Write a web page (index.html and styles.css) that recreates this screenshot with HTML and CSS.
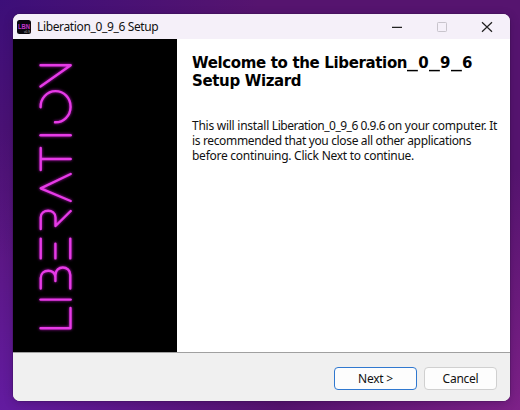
FILE: index.html
```html
<!DOCTYPE html>
<html lang="en">
<head>
<meta charset="utf-8">
<title>Liberation_0_9_6 Setup</title>
<link rel="stylesheet" href="styles.css">
</head>
<body>
<main class="window">
  <header class="titlebar">
    <svg class="app-icon" viewBox="0 0 14 14" aria-hidden="true">
      <rect width="14" height="14" rx="2.5" fill="#08050c"/>
      <text class="icon-name" x="1" y="8.8" textLength="12" lengthAdjust="spacingAndGlyphs">LBN</text>
      <text class="icon-version" x="7" y="12.6">v0.9</text>
    </svg>
    <span class="title">Liberation_0_9_6 Setup</span>
    <div class="controls">
      <svg viewBox="0 0 12 12"><path d="M1 6.4H11" stroke="#222" stroke-width="1.2"/></svg>
      <svg viewBox="0 0 12 12"><rect x="1.5" y="1.5" width="9" height="9" rx=".8" fill="none" stroke="#c8c4cc"/></svg>
      <svg viewBox="0 0 12 12"><path d="M1 1.2L11 10.8M11 1.2L1 10.8" stroke="#222" stroke-width="1.2"/></svg>
    </div>
  </header>
  <section class="content">
    <aside class="banner">
      <svg class="logo" viewBox="13 39 164 313" role="img" aria-label="Liberation">
        <g class="neon">
          <polyline points="40.5,65.3 70.7,65.3 40.5,86.5"/>
          <path d="M40.6 107.3A15 15.6 0 1 1 55 122.3"/>
          <line x1="40.5" y1="135.3" x2="70.7" y2="135.3"/>
          <path d="M40.7 148V170M40.7 159H70.7"/>
          <polyline points="70.7,174 40.7,188.3 70.7,201"/>
          <path d="M40.7 229V217.5C40.7 208.5 55.5 208.5 55.5 217.5V226L70.7 211"/>
          <path d="M40.7 238.6V258.4M55.4 243.6V258.4M70.3 238.6V258.4"/>
          <path d="M40.7 288.5V278C40.7 268.5 55.4 268.5 55.4 277V281V275C55.4 265 70.3 265 70.3 275V288.5"/>
          <line x1="40.5" y1="299.6" x2="70.7" y2="299.6"/>
          <polyline points="40.5,328.2 70.5,328.2 70.5,308"/>
        </g>
      </svg>
    </aside>
    <div class="copy">
      <h1><span class="heading-line">Welcome to the Liberation<span class="version"><i>_</i>0<i>_</i>9<i>_</i>6</span></span><span class="heading-line">Setup Wizard</span></h1>
      <p><span class="line">This will install <span class="name">Liberation_0_9_6 0.9.6 </span>on your computer. It</span><span class="line second">is recommended that you close all other applications</span><span class="line">before continuing. Click Next to continue.</span></p>
    </div>
  </section>
  <footer class="actions">
    <button class="btn btn-next">Next &gt;</button>
    <button class="btn btn-cancel">Cancel</button>
  </footer>
</main>
</body>
</html>
```
FILE: styles.css
```css
* { box-sizing: border-box; }
body {
  margin: 0;
  width: 520px;
  height: 410px;
  padding: 14px 10px 9px 13px;
  overflow: hidden;
  background:
    radial-gradient(circle at 0 0, rgba(58, 14, 122, .9), rgba(58, 14, 122, 0) 260px),
    radial-gradient(circle at 0 100%, rgba(100, 28, 165, .9), rgba(100, 28, 165, 0) 280px),
    radial-gradient(circle at 100% 100%, #7d2188, rgba(125, 33, 136, 0) 240px),
    #56146f;
  font-family: "Noto Sans", sans-serif;
  font-size: 12px;
  color: #111;
}
.window {
  width: 497px;
  height: 387px;
  display: flex;
  flex-direction: column;
  border-radius: 7px;
  overflow: hidden;
  background: #fff;
  box-shadow: 0 0 0 .5px rgba(50, 20, 70, .5), 0 2px 10px rgba(40, 0, 60, .3);
}
.titlebar {
  height: 25px;
  flex: none;
  display: flex;
  align-items: center;
  padding: 0 17px 0 4px;
  background: #f5f0f9;
}
.app-icon { width: 14px; height: 14px; margin-right: 6px; }
.icon-name { font: bold 6.5px "Liberation Sans", sans-serif; fill: #c436cf; }
.icon-version { font: 3.2px "Liberation Sans", sans-serif; fill: #bbb; }
.title { letter-spacing: -.36px; white-space: nowrap; }
.controls { margin-left: auto; display: flex; gap: 33px; }
.controls svg { width: 12px; height: 12px; }
.content { height: 313px; flex: none; display: flex; }
.banner { width: 164px; flex: none; background: #000; }
.logo { display: block; width: 164px; height: 313px; }
.neon {
  fill: none;
  stroke: #e63be6;
  stroke-width: 2.4;
  stroke-linecap: round;
  stroke-linejoin: round;
  filter: drop-shadow(0 0 1.5px #b010b6);
}
.copy { padding: 15px 0 0 15px; white-space: nowrap; }
h1 {
  margin: 0;
  font: bold 15px/18px "DejaVu Sans", sans-serif;
  letter-spacing: -.35px;
  color: #000;
}
.heading-line { display: block; }
.version { letter-spacing: .5px; }
.version i {
  display: inline-block;
  width: 11px;
  font-style: normal;
  letter-spacing: 0;
  transform: scaleX(1.45);
  transform-origin: left;
}
p { margin: 28px 0 0; line-height: 15px; letter-spacing: -.26px; }
.line { display: block; height: 15px; }
.name { letter-spacing: -.48px; }
.second { letter-spacing: -.35px; }
.actions {
  flex: 1;
  display: flex;
  justify-content: flex-end;
  gap: 7px;
  padding: 14px 13px 0;
  border-top: 1px solid #a0a0a0;
  background: #f0f0f0;
}
.btn {
  height: 23px;
  padding: 0;
  border: 1px solid #d0d0d0;
  border-radius: 4px;
  background: #fdfdfd;
  font: inherit;
  letter-spacing: -.25px;
  color: #111;
}
.btn-next { width: 83px; border-color: #3078cf; }
.btn-cancel { width: 73px; }
```
